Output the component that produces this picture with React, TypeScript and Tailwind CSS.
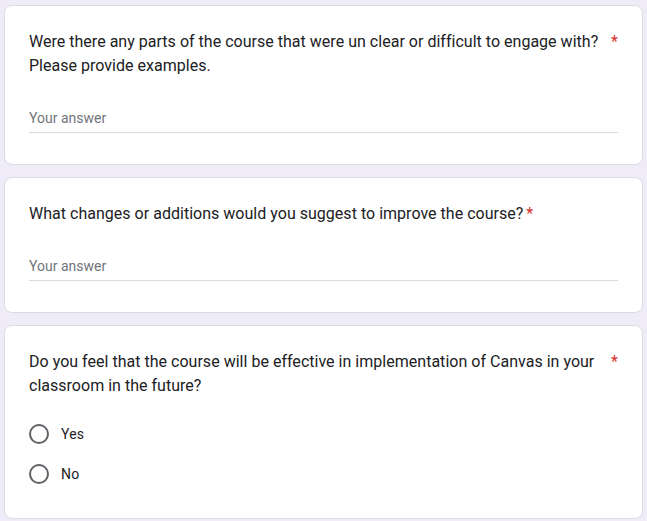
import React from "react";

function Title({ text }: { text: string }) {
  return (
    <div className="flex items-start text-[16px] leading-[24px] text-[#202124] tracking-[0.02px]">
      <span className="min-w-0">{text}</span>
      <span className="pl-[3px] text-[#d93025] shrink-0">*</span>
    </div>
  );
}

function TextCard({ text }: { text: string }) {
  return (
    <div className="bg-white border border-[#dadce0] rounded-[8px] px-6 pt-6 pb-[31px]">
      <Title text={text} />
      <div className="mt-[30px] border-b border-[#dadce0] pb-1">
        <div className="text-[14px] leading-[20px] text-[#70757a]">Your answer</div>
      </div>
    </div>
  );
}

function Radio({ label }: { label: string }) {
  return (
    <div className="flex items-center h-10">
      <div className="w-5 h-5 rounded-full border-2 border-[#5f6368] shrink-0" />
      <span className="ml-3 text-[14px] leading-[20px] text-[#202124] tracking-[0.2px]">{label}</span>
    </div>
  );
}

export default function App() {
  return (
    <div
      className="min-h-screen bg-[#f0ebf8] px-1 pt-[5px] pb-4 flex flex-col gap-3"
      style={{ fontFamily: "Roboto, 'Liberation Sans', Arial, sans-serif" }}
    >
      <TextCard text="Were there any parts of the course that were un clear or difficult to engage with? Please provide examples." />
      <TextCard text="What changes or additions would you suggest to improve the course?" />
      <div className="bg-white border border-[#dadce0] rounded-[8px] px-6 pt-6 pb-6">
        <Title text="Do you feel that the course will be effective in implementation of Canvas in your classroom in the future?" />
        <div className="mt-4 flex flex-col">
          <Radio label="Yes" />
          <Radio label="No" />
        </div>
      </div>
    </div>
  );
}
